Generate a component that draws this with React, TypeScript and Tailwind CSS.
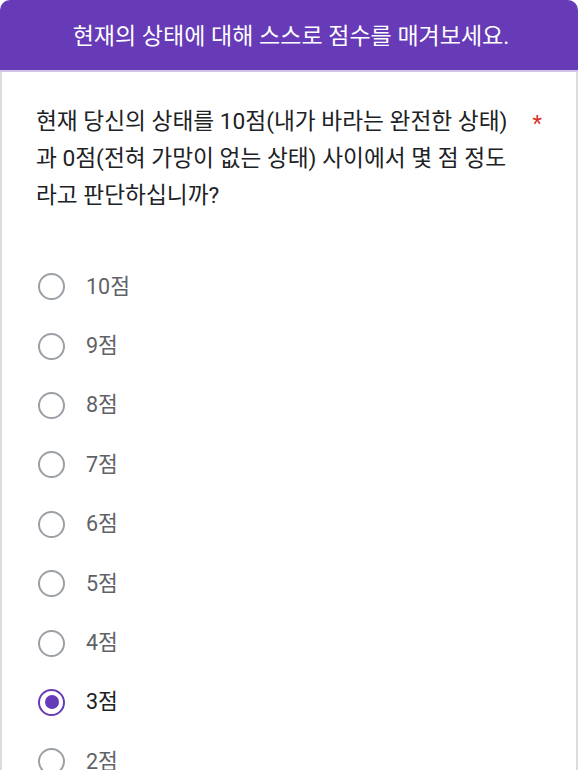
const options = ['10점', '9점', '8점', '7점', '6점', '5점', '4점', '3점', '2점', '1점', '0점'];

const Radio: React.FC<{ checked: boolean }> = ({ checked }) => (
  <span
    className={
      checked
        ? 'flex h-[27px] w-[27px] items-center justify-center rounded-full border-[2.5px] border-[#673ab7]'
        : 'flex h-[27px] w-[27px] items-center justify-center rounded-full border-[2.5px] border-[#9aa0a6]'
    }
  >
    {checked && <span className="h-[14px] w-[14px] rounded-full bg-[#673ab7]"></span>}
  </span>
);

export default function App() {
  const selected = '3점';
  return (
    <div
      className="h-[770px] overflow-hidden bg-white"
      style={{ fontFamily: 'Roboto, "Noto Sans CJK KR", sans-serif' }}
    >
      <div className="mr-[2px] overflow-hidden rounded-t-[10px]">
        {/* Header */}
        <div className="flex h-[72px] items-center justify-center border-b-2 border-[#d1c4e9] bg-[#673ab7] pl-[4px] pt-[5px]">
          <span className="text-[23px] text-white">현재의 상태에 대해 스스로 점수를 매겨보세요.</span>
        </div>

        {/* Body */}
        <div className="border-x-2 border-[#dadce0] pb-10">
          <div className="flex pt-[31px] pl-[34px] pr-[34px]">
            <p className="flex-1 text-[22.7px] leading-[37px] text-[#202124]">
              현재 당신의 상태를 10점(내가 바라는 완전한 상태)
              <br />
              과 0점(전혀 가망이 없는 상태) 사이에서 몇 점 정도
              <br />
              라고 판단하십니까?
            </p>
            <span className="pt-[2px] text-[22px] leading-[37px] text-[#d93025]">*</span>
          </div>

          <div className="mt-[43px] flex flex-col pl-[36px]">
            {options.map((o) => (
              <div key={o} className="flex h-[59.4px] items-center gap-[21px]">
                <Radio checked={o === selected} />
                <span
                  className={
                    o === selected
                      ? 'text-[21.5px] text-[#202124]'
                      : 'text-[21.5px] text-[#5f6368]'
                  }
                >
                  {o}
                </span>
              </div>
            ))}
          </div>
        </div>
      </div>
    </div>
  );
}
